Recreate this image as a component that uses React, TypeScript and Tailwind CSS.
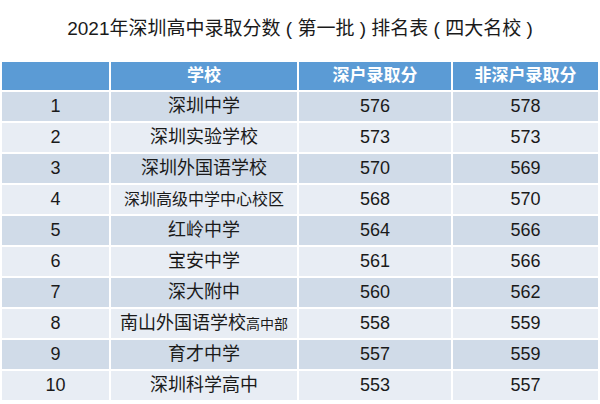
import React from 'react';

type Row = { rank: number; school: React.ReactNode; sz: number; other: number };

const rows: Row[] = [
  { rank: 1, school: '深圳中学', sz: 576, other: 578 },
  { rank: 2, school: '深圳实验学校', sz: 573, other: 573 },
  { rank: 3, school: '深圳外国语学校', sz: 570, other: 569 },
  { rank: 4, school: <span className="text-[16px]">深圳高级中学中心校区</span>, sz: 568, other: 570 },
  { rank: 5, school: '红岭中学', sz: 564, other: 566 },
  { rank: 6, school: '宝安中学', sz: 561, other: 566 },
  { rank: 7, school: '深大附中', sz: 560, other: 562 },
  {
    rank: 8,
    school: (
      <span>
        南山外国语学校<span className="text-[14px]">高中部</span>
      </span>
    ),
    sz: 558,
    other: 559,
  },
  { rank: 9, school: '育才中学', sz: 557, other: 559 },
  { rank: 10, school: '深圳科学高中', sz: 553, other: 557 },
];

const cols = 'grid grid-cols-[107px_186px_152px_1fr] gap-x-[2px]';

const App: React.FC = () => {
  return (
    <div
      className="h-[404px] w-[600px] overflow-hidden bg-white text-[#1a1a1a]"
      style={{ fontFamily: '"Liberation Sans", "Noto Sans CJK SC", sans-serif' }}
    >
      <h1 className="pt-[16px] text-center text-[19px] leading-[25px] font-normal">
        2021年深圳高中录取分数 ( 第一批 ) 排名表 ( 四大名校 )
      </h1>

      <div className="mx-[2px] mt-[21px] flex flex-col gap-y-[2px]">
        <div className={`${cols} h-[28px] text-[17px] font-bold text-white`}>
          <div className="bg-[#5b9bd5]" />
          <div className="flex items-center justify-center bg-[#5b9bd5]">学校</div>
          <div className="flex items-center justify-center bg-[#5b9bd5]">深户录取分</div>
          <div className="flex items-center justify-center bg-[#5b9bd5]">非深户录取分</div>
        </div>

        {rows.map((r) => {
          const bg = r.rank % 2 === 1 ? 'bg-[#d0dbe8]' : 'bg-[#e8edf4]';
          return (
            <div key={r.rank} className={`${cols} h-[29px] text-[18px]`}>
              <div className={`flex items-center justify-center ${bg}`}>{r.rank}</div>
              <div className={`flex items-center justify-center ${bg}`}>{r.school}</div>
              <div className={`flex items-center justify-center ${bg}`}>{r.sz}</div>
              <div className={`flex items-center justify-center ${bg}`}>{r.other}</div>
            </div>
          );
        })}
      </div>
    </div>
  );
};

export default App;
